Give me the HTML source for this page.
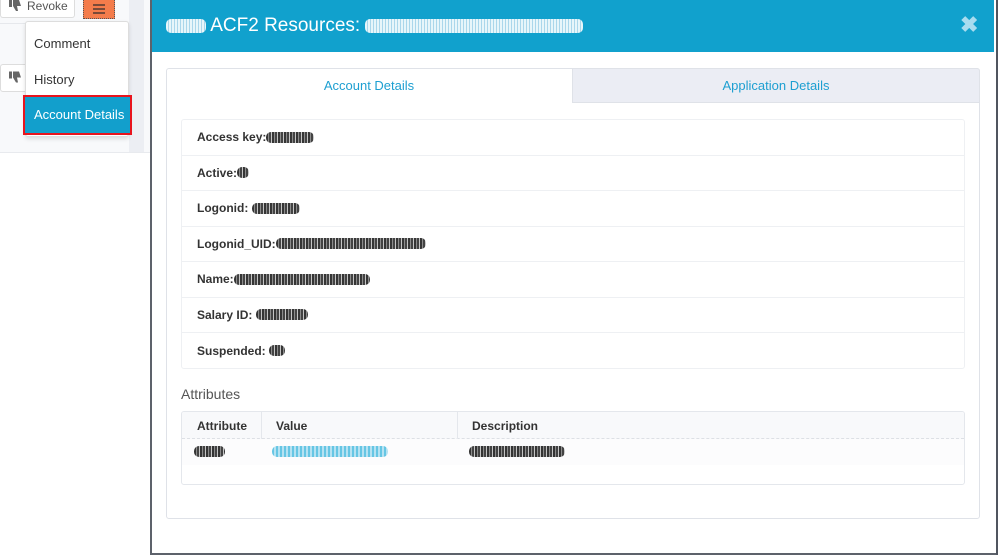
<!DOCTYPE html>
<html><head><meta charset="utf-8"><style>
*{box-sizing:border-box;margin:0;padding:0}
body{width:998px;height:555px;overflow:hidden;background:#fff;font-family:"Liberation Sans",Arial,sans-serif;position:relative}
.abs{position:absolute}
.blur{display:inline-block;vertical-align:middle;height:11px;border-radius:5px;background:repeating-linear-gradient(90deg,#111 0 2px,#777 2px 3px,#222 3px 5px,#bbb 5px 6px);opacity:.85}
.row{height:35.5px;border-bottom:1px solid #eef0f3;display:flex;align-items:center;padding-left:15px;font-size:12px;font-weight:bold;color:#333}
.row:last-child{border-bottom:none}
</style></head><body>
<div class="abs" style="left:0;top:0;width:150px;height:152px;background:#f8f9fb"></div>
<div class="abs" style="left:0;top:152px;width:150px;height:1px;background:#e8eaee"></div>
<div class="abs" style="left:129px;top:0;width:15px;height:152px;background:#eceef3"></div>
<div class="abs" style="left:0;top:23px;width:129px;height:1px;background:#e6e8ec"></div>
<div class="abs" style="left:0;top:0;width:75px;height:18px;background:#fff;border:1px solid #ddd;border-top:none;border-radius:0 0 3px 3px;font-size:12px;color:#555;padding:0 0 0 26px;line-height:12px">Revoke</div>
<svg class="abs" style="left:9px;top:0" width="14" height="12" viewBox="0 0 14 12"><rect x="0" y="0" width="3" height="7" fill="#666"/><path d="M4 0h6l2 6h-4l1 5h-2l-3-5z" fill="#666"/></svg>
<div class="abs" style="left:83px;top:0;width:32px;height:19px;background:#f47c4b;border:1px dotted #555;border-top:none"></div>
<div class="abs" style="left:93px;top:4px;width:12px;height:2px;background:#7a4a38;box-shadow:0 4px 0 #7a4a38,0 8px 0 #7a4a38"></div>
<div class="abs" style="left:0;top:64px;width:28px;height:28px;background:#fff;border:1px solid #ddd;border-radius:3px"></div>
<svg class="abs" style="left:9px;top:71px" width="14" height="13" viewBox="0 0 14 12"><rect x="0" y="0" width="3" height="7" fill="#666"/><path d="M4 0h6l2 6h-4l1 5h-2l-3-5z" fill="#666"/></svg>
<div class="abs" style="left:25px;top:21px;width:104px;height:116px;background:#fff;border:1px solid #ddd;border-radius:3px;box-shadow:0 2px 4px rgba(0,0,0,.12)"></div>
<div class="abs" style="left:34px;top:36px;font-size:13px;color:#333">Comment</div>
<div class="abs" style="left:34px;top:72px;font-size:13px;color:#333">History</div>
<div class="abs" style="left:23px;top:95px;width:109px;height:40px;border:2px solid #e8141d;background:#129fcc;color:#fff;font-size:13px;line-height:36px;padding-left:9px">Account Details</div>
<!-- modal -->
<div class="abs" style="left:994px;top:0;width:4px;height:555px;background:#50555f"></div>
<div class="abs" style="left:150px;top:0;width:846px;height:555px;border-left:2px solid #5d626b;border-bottom:2px solid #5d626b;background:#fff"></div>
<div class="abs" style="left:152px;top:0;width:842px;height:52px;background:#11a1cd"></div>
<div class="abs" style="left:166px;top:14px;font-size:19px;color:#fff;line-height:24px"><span class="blur" style="width:40px;height:14px;background:repeating-linear-gradient(90deg,#fff 0 2px,#bde 2px 3px);opacity:.9"></span> ACF2 Resources: <span class="blur" style="width:218px;height:14px;background:repeating-linear-gradient(90deg,#fff 0 2px,#bde 2px 3px);opacity:.9"></span></div>
<div class="abs" style="left:960px;top:12px;font-size:22px;font-weight:bold;color:#a8dcef">✖</div>
<div class="abs" style="left:166px;top:68px;width:814px;height:451px;border:1px solid #dfe2e8;border-radius:3px"></div>
<div class="abs" style="left:572px;top:68px;width:408px;height:35px;background:#ebedf4;border:1px solid #dfe2e8;border-radius:0 3px 0 0;font-size:13px;color:#1d9fd1;text-align:center;line-height:34px">Application Details</div>
<div class="abs" style="left:166px;top:68px;width:406px;height:35px;font-size:13px;color:#1d9fd1;text-align:center;line-height:36px">Account Details</div>
<div class="abs" style="left:181px;top:119px;width:784px;height:250px;border:1px solid #eef0f3;border-radius:3px">
<div class="row">Access key:<span class="blur" style="width:48px"></span></div>
<div class="row">Active:<span class="blur" style="width:12px"></span></div>
<div class="row">Logonid:&nbsp;<span class="blur" style="width:48px"></span></div>
<div class="row">Logonid_UID:<span class="blur" style="width:150px"></span></div>
<div class="row">Name:<span class="blur" style="width:136px"></span></div>
<div class="row">Salary ID:&nbsp;<span class="blur" style="width:52px"></span></div>
<div class="row">Suspended:&nbsp;<span class="blur" style="width:16px"></span></div>
</div>
<div class="abs" style="left:181px;top:386px;font-size:14px;color:#555">Attributes</div>
<div class="abs" style="left:181px;top:411px;width:784px;height:74px;border:1px solid #e4e7ec;border-radius:3px;overflow:hidden">
<div style="height:27px;background:#f8f9fb;border-bottom:1px dashed #dde0e5;font-size:12px;font-weight:bold;color:#333;position:relative">
<span class="abs" style="left:15px;top:7px">Attribute</span>
<span class="abs" style="left:79px;top:0;width:1px;height:27px;background:#e4e7ec"></span>
<span class="abs" style="left:94px;top:7px">Value</span>
<span class="abs" style="left:275px;top:0;width:1px;height:27px;background:#e4e7ec"></span>
<span class="abs" style="left:290px;top:7px">Description</span>
</div>
<div style="position:relative;height:26px;background:#fcfcfd">
<span class="blur abs" style="left:12px;top:7px;width:31px"></span>
<span class="blur abs" style="left:90px;top:7px;width:116px;background:repeating-linear-gradient(90deg,#4bbce0 0 2px,#a9def0 2px 4px)"></span>
<span class="blur abs" style="left:287px;top:7px;width:96px"></span>
</div>
</div>
</body></html>
